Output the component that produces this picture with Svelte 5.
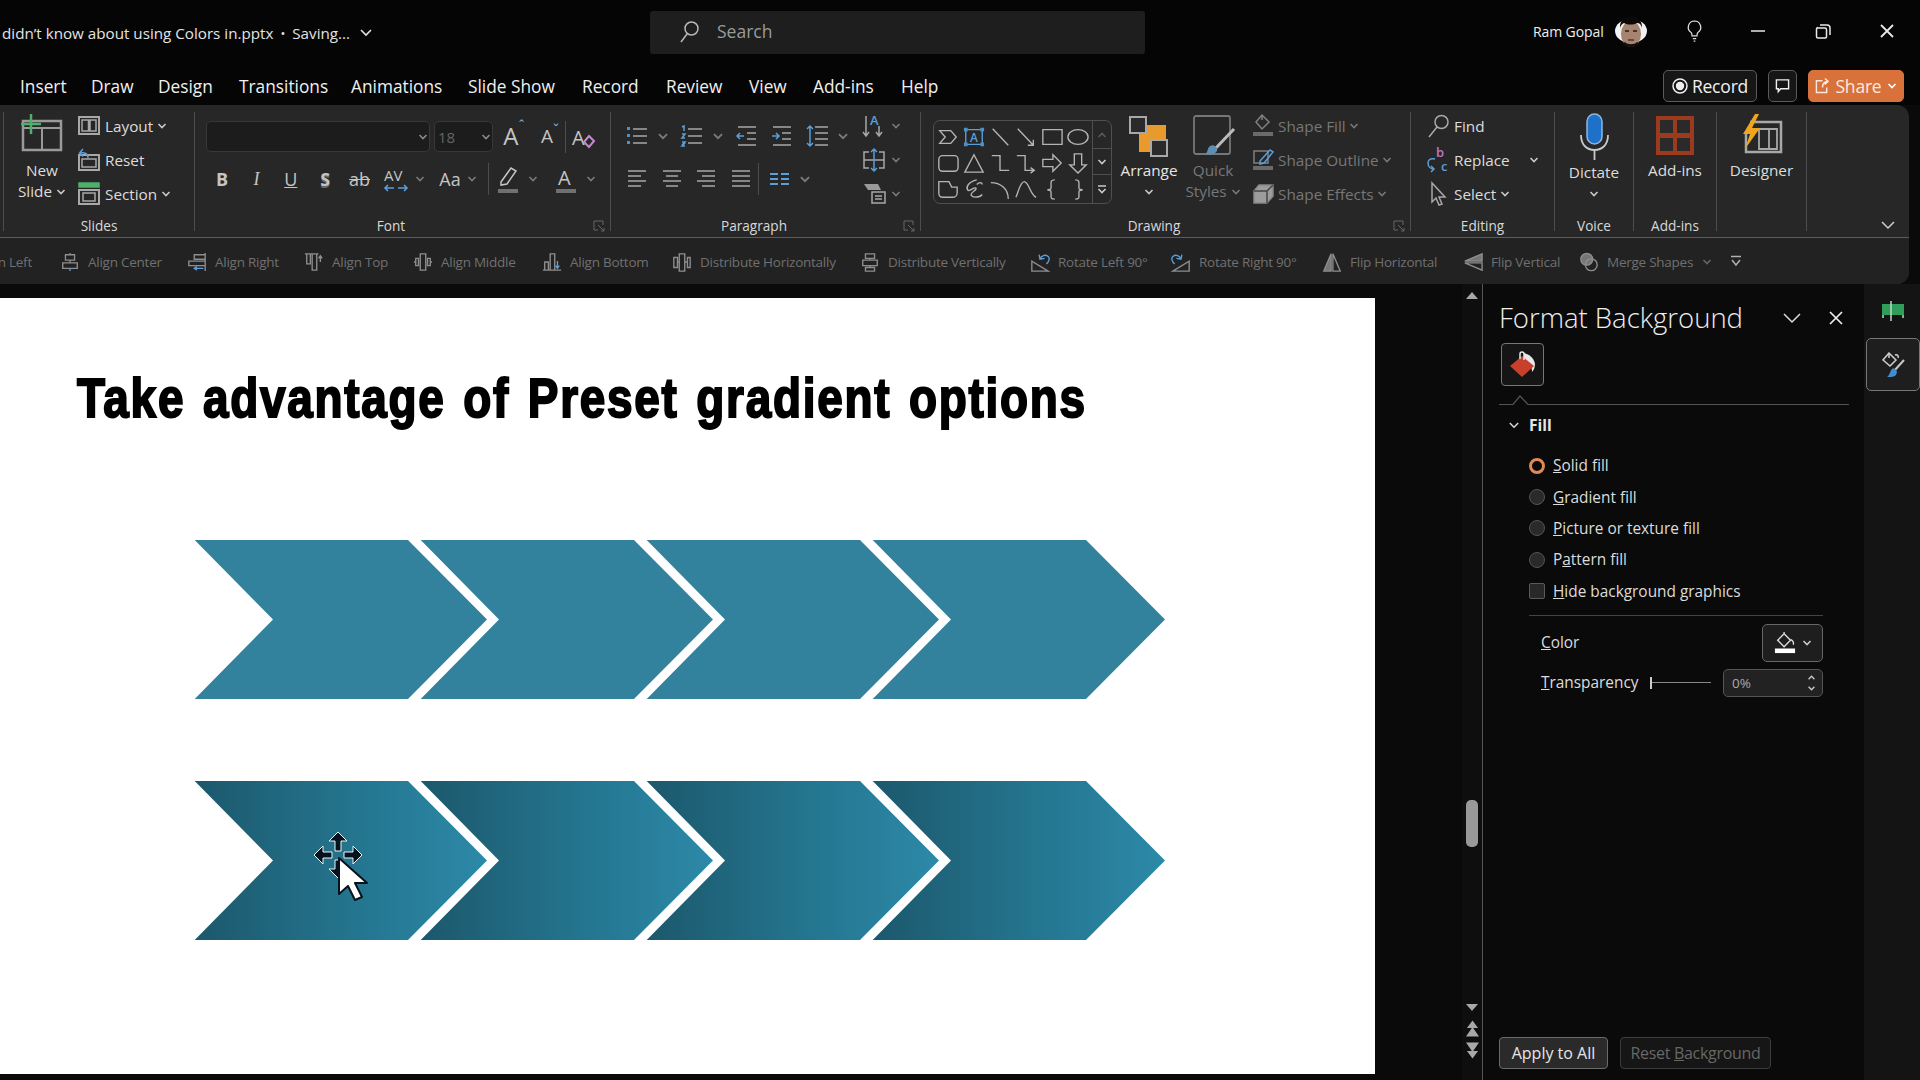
<script>
  const tabs = ["Insert", "Draw", "Design", "Transitions", "Animations", "Slide Show", "Record", "Review", "View", "Add-ins", "Help"];

  const qat = [
    { t: "Align Left", d: "M2 1v20M2 4h10v5H2zM2 12h16v5H2z" },
    { t: "Align Center", d: "M6 3h10v6H6zM3 12h16v6H3zM11 1v2M11 9v3", a: "M11 18v3" },
    { t: "Align Right", d: "M20 1v20M8 3h12v5H8zM2 10h18v5H2z", a: "M18 18H8m3-2-3 2 3 2" },
    { t: "Align Top", d: "M1 2h15M3 2v11h4V2M9 2v18h5V2M18 11V4m-2 3 2-3 2 3" },
    { t: "Align Middle", d: "M1 11h2M3 7h3v8H3zM8 2h6v18H8zM16 7h3v8h-3zM19 11h2" },
    { t: "Align Bottom", d: "M1 20h20M3 11h4v9H3zM9 2h5v18H9z", a: "M17 10v8m-2-3 2 3 2-3" },
    { t: "Distribute Horizontally", d: "M2 6h4v11H2zM8 2h6v19H8zM17 6h3v11h-3zM6 11h2M14 11h3" },
    { t: "Distribute Vertically", d: "M6 2h10v5H6zM3 9h16v6H3zM6 17h10v4H6zM11 7v2M11 15v2" },
    { t: "Rotate Left 90°", d: "M2 10v11h18z", a: "M11 8c1-4 6-6 9-3 2 2 1 6-2 8M10 3l1 5 5-1" },
    { t: "Rotate Right 90°", d: "M20 10v11H2z", a: "M11 8C10 4 5 2 2 5c-2 2-1 6 2 8M12 3l-1 5-5-1" },
    { t: "Flip Horizontal", d: "M2 21 10 2v19zM12 2l8 19h-8z", fill: "M2 21 10 2v19z" },
    { t: "Flip Vertical", d: "M21 2 2 10h19zM2 12l19 8v-8z", fill: "M21 2 2 10h19z" },
    { t: "Merge Shapes", d: "M15 8A6.500 6.500 0 1 1 2 8a6.500 6.500 0 0 1 13 0zM20 14a6.500 6.500 0 1 1-13 0 6.500 6.500 0 0 1 13 0z", fill: "M15 8A6.500 6.500 0 1 1 2 8a6.500 6.500 0 0 1 13 0z", cv: true }
  ];

  const gallery = [
    "M3 5h12l6 7-6 7H3l6-7z",
    "box",
    "M4 3l17 18",
    "M3 3l17 18m-6 0h6v-6",
    "M2 4h21v16H2z",
    "M23 12a11 8 0 1 1-22 0 11 8 0 0 1 22 0z",
    "M6 4h13a4 4 0 0 1 4 4v9a4 4 0 0 1-4 4H6a4 4 0 0 1-4-4V8a4 4 0 0 1 4-4z",
    "M12 3l10 19H2z",
    "M3 4h9v16h10",
    "M2 4h9v16h10m-4-3 4 3-4 3",
    "M2 8h11V3l9 9-9 9v-5H2z",
    "M8 2h8v12h5l-9 9-9-9h5z",
    "M2 4h11l3 6h6v6a5 5 0 0 1-5 5H6a4 4 0 0 1-4-4z",
    "M15 2C6 4 3 10 5 13c2 3 7-4 9-2s-7 5-5 8 10 2 12-1M15 7c3-3 6-2 6 0",
    "M2 5c10 0 19 6 19 18",
    "M1 21C4 14 6 4 10 4c5 0 7 15 13 17",
    "M15 2c-5 0-4 3-4 7s0 3-4 4c4 1 4 0 4 4s-1 6 4 6",
    "M9 2c5 0 4 3 4 7s0 3 4 4c-4 1-4 0-4 4s1 6-4 6"
  ];

  const options = [
    ["", "S", "olid fill", true],
    ["", "G", "radient fill", false],
    ["", "P", "icture or texture fill", false],
    ["P", "a", "ttern fill", false]
  ];

  const chevron = "M0 0H213.3L292.3 79.5 213.3 159H0L78.3 79.5Z";
  const steps = [0, 226, 452, 678];
</script>

{#snippet cv(cls = "")}
  <svg class="cv {cls}" viewBox="0 0 10 6"><path d="M1.500 1 5 4.500 8.500 1" /></svg>
{/snippet}

{#snippet launcher()}
  <svg class="launch" viewBox="0 0 12 12"><path d="M1 1h9v4M1 1v9h4M5 5l6 6M8 11h3V8" /></svg>
{/snippet}

<div class="app">
  <header class="titlebar">
    <div class="doc">
      <span>didn’t know about using Colors in.pptx</span>
      <span class="dot">•</span>
      <span>Saving...</span>
      <svg class="doc-cv" viewBox="0 0 12 8"><path d="M1 1l5 5 5-5" /></svg>
    </div>
    <div class="search">
      <svg viewBox="0 0 20 22"><path d="M19 7.500a6.500 6.500 0 1 1-13 0 6.500 6.500 0 0 1 13 0zM8 13l-6 8" /></svg>
      <span>Search</span>
    </div>
    <div class="win">
      <span class="user">Ram Gopal</span>
      <svg class="avatar" viewBox="0 0 36 36">
        <ellipse cx="18" cy="18" rx="16" ry="12" fill="#f2f2f2" stroke="none" />
        <ellipse cx="18" cy="21" rx="10" ry="13" fill="#a58470" stroke="none" />
        <path d="M7 15C6 -1 30 -1 29 15 28 11 26 10 24 10 20 12 15 12 11 10 9 11 8 12 7 15z" fill="#0a0808" stroke="none" />
        <path d="M9 31c3 4 15 4 18 0l-3-2c-2 3-10 3-12 0z" fill="#120d0c" stroke="none" />
        <path d="M12 18h4M20 18h4" stroke="#2a1a14" stroke-width="1.600" />
        <path d="M15 27h6" stroke="#5a2f28" stroke-width="1.500" />
      </svg>
      <svg class="bulb" viewBox="0 0 18 26"><path d="M9 1a7.500 7.500 0 0 0-4 13.800c1 1 1 3 1 4h6c0-1 0-3 1-4A7.500 7.500 0 0 0 9 1zM7 22h4M8 25h2" /></svg>
      <svg class="winbtn min" viewBox="0 0 14 14"><path d="M0 7h14" /></svg>
      <svg class="winbtn rest" viewBox="0 0 16 16"><path d="M2 5h8a1.500 1.500 0 0 1 1.500 1.500V14a1.500 1.500 0 0 1-1.500 1H3a1.500 1.500 0 0 1-1.500-1.500V6A1.500 1.500 0 0 1 3 4.500M5 2h7a3 3 0 0 1 3 3v7" /></svg>
      <svg class="winbtn cls" viewBox="0 0 14 14"><path d="M1 1l12 12M13 1 1 13" /></svg>
    </div>
  </header>

  <nav class="tabs">
    {#each tabs as tab}
      <span class="tab">{tab}</span>
    {/each}
    <div class="actions">
      <button class="rec">
        <svg viewBox="0 0 16 16"><circle cx="8" cy="8" r="7" /><circle cx="8" cy="8" r="4.200" fill="#eee" stroke="none" /></svg>
        Record
      </button>
      <button class="cmt">
        <svg viewBox="0 0 16 16"><path d="M1.500 2h13v9.500H6L3.500 14.500v-3h-2z" /></svg>
      </button>
      <button class="share">
        <svg viewBox="0 0 16 18"><path d="M8 4H1.500v12.500h11V11M8 11c0-4 2-6 6-6.500M10.500 1.500 14 4.500 10.500 8" /></svg>
        Share
        {@render cv()}
      </button>
    </div>
  </nav>

  <section class="ribwrap">
    <div class="ribbon">
      <div class="sep first"></div>

      <div class="group g-slides">
        <div class="body row">
          <div class="big newslide">
            <svg class="bi" viewBox="0 0 46 47">
              <path d="M4 7h38v29H4z" stroke="#9a9a9a" stroke-width="2.500" />
              <path d="M4 14h38M23 14v22" stroke="#9a9a9a" stroke-width="2" />
              <path d="M12 0v20M2 10h20" stroke="#4fb06a" stroke-width="2.500" />
            </svg>
            <span>New</span>
            <span class="cvline">Slide {@render cv()}</span>
          </div>
          <div class="list">
            <div class="li">
              <svg class="lic" viewBox="0 0 22 22"><path d="M1 2h20v17H1z" stroke-width="2" /><path d="M4 5h6.500v11H4zM12 5h6v11h-6z" /></svg>
              <span>Layout</span>{@render cv()}
            </div>
            <div class="li">
              <svg class="lic" viewBox="0 0 22 22"><path d="M1 6h20v15H1z" stroke-width="2" /><path d="M4 10h14v8H4z" /><path class="blue" d="M10 9C10 4 6 3 2 4M5 0 1.500 4 5 7.500" /></svg>
              <span>Reset</span>
            </div>
            <div class="li">
              <svg class="lic" viewBox="0 0 22 24"><path d="M1 1h20v4H1z" fill="#4fb06a" stroke="#4fb06a" /><path d="M1 8h20v14H1z" stroke-width="2" /><path d="M5 11h12v8H5z" /></svg>
              <span>Section</span>{@render cv()}
            </div>
          </div>
        </div>
        <div class="label"><span>Slides</span></div>
      </div>
      <div class="sep"></div>

      <div class="group g-font">
        <div class="body col">
          <div class="frow">
            <div class="field fontname">{@render cv()}</div>
            <div class="field fontsize"><span>18</span>{@render cv()}</div>
            <span class="t t36 gl big-a">A<sup class="up">ˆ</sup></span>
            <span class="t t34 gl mid-a">A<sup class="dn">ˇ</sup></span>
            <span class="vr"></span>
            <span class="t t36">
              <svg viewBox="0 0 26 26">
                <text x="1" y="21" class="svgt">A</text>
                <path d="M18 12l5 5-5 6-5-5z" stroke="#c48ad0" stroke-width="2" />
              </svg>
            </span>
          </div>
          <div class="frow r2">
            <span class="t t30 fmt b">B</span>
            <span class="t t30 fmt i">I</span>
            <span class="t t30 fmt u">U</span>
            <span class="t t30 fmt s">S</span>
            <span class="t t30 fmt st">ab</span>
            <span class="t pair av">
              <svg class="pic" viewBox="0 0 30 30">
                <text x="3" y="17" class="svgt sm">AV</text>
                <path class="blue" d="M4 24h9M7 21l-3 3 3 3M17 24h9M23 21l3 3-3 3" />
              </svg>
              {@render cv()}
            </span>
            <span class="t pair aa"><span class="fmt">Aa</span>{@render cv()}</span>
            <span class="vr"></span>
            <span class="t pair hl">
              <svg class="pic" viewBox="0 0 24 28">
                <path d="M5 17 15 3l5 3-9 13-6 1z" />
                <path d="M2 24h20v4H2z" fill="#707070" stroke="none" />
              </svg>
              {@render cv()}
            </span>
            <span class="t pair fc">
              <svg class="pic" viewBox="0 0 24 28">
                <text x="4" y="20" class="svgt">A</text>
                <path d="M2 24h20v4H2z" fill="#707070" stroke="none" />
              </svg>
              {@render cv()}
            </span>
          </div>
        </div>
        <div class="label launchable"><span>Font</span>{@render launcher()}</div>
      </div>
      <div class="sep"></div>

      <div class="group g-para">
        <div class="body row">
          <div class="col pcols">
            <div class="prow">
              <span class="pr">
                <svg viewBox="0 0 24 24"><path d="M8 5h14M8 12h14M8 19h14" /><path class="bluefill" d="M2 3h3v3H2zM2 10h3v3H2zM2 17h3v3H2z" /></svg>
                {@render cv()}
              </span>
              <span class="pr">
                <svg viewBox="0 0 24 24"><path d="M8 5h14M8 12h14M8 19h14" /><path class="blue" d="M2 3l2-1v5M2 10h3l-3 4h3M2 18h3l-2 2h1l-2 2h3" /></svg>
                {@render cv()}
              </span>
              <svg viewBox="0 0 24 24"><path d="M3 3h18M12 9h9M12 15h9M3 21h18" /><path class="blue" d="M9 12H2m3-3-3 3 3 3" /></svg>
              <svg viewBox="0 0 24 24"><path d="M3 3h18M12 9h9M12 15h9M3 21h18" /><path class="blue" d="M2 12h7M6 9l3 3-3 3" /></svg>
              <span class="pr">
                <svg viewBox="0 0 24 24"><path d="M10 3h13M10 9h13M10 15h13M10 21h13" /><path class="blue" d="M5 2v20M2 5l3-3 3 3M2 19l3 3 3-3" /></svg>
                {@render cv()}
              </span>
            </div>
            <div class="prow r2">
              <svg viewBox="0 0 24 24"><path d="M3 4h18M3 9h13M3 14h18M3 19h13" /></svg>
              <svg viewBox="0 0 24 24"><path d="M3 4h18M6 9h12M3 14h18M6 19h12" /></svg>
              <svg viewBox="0 0 24 24"><path d="M3 4h18M8 9h13M3 14h18M8 19h13" /></svg>
              <svg viewBox="0 0 24 24"><path d="M3 4h18M3 9h18M3 14h18M3 19h18" /></svg>
              <span class="vr"></span>
              <span class="pr">
                <svg viewBox="0 0 24 24"><path class="blue" d="M3 7h8M3 12h8M3 17h8M14 7h8M14 12h8M14 17h8" stroke-width="1.800" /></svg>
                {@render cv()}
              </span>
            </div>
          </div>
          <div class="list pside">
            <div class="li">
              <svg class="lic" viewBox="0 0 24 26"><path d="M4 3v20M1 19l3 4 3-4M17 13v10M14 19l3 4 3-4" /><text x="8" y="12" class="svgt xs blue-t">A</text></svg>
              {@render cv()}
            </div>
            <div class="li">
              <svg class="lic" viewBox="0 0 24 24"><path d="M7 4H2v16h5M17 4h5v16h-5M2 12h20" /><path class="blue" d="M12 1v22M9 4l3-3 3 3M9 20l3 3 3-3" /></svg>
              {@render cv()}
            </div>
            <div class="li">
              <svg class="lic" viewBox="0 0 24 24"><path d="M2 2h14l3 6H6z" fill="#9a9a9a" stroke="none" /><path d="M10 10h13v11H10zM13 14h7M13 17h7" /></svg>
              {@render cv()}
            </div>
          </div>
        </div>
        <div class="label launchable"><span>Paragraph</span>{@render launcher()}</div>
      </div>
      <div class="sep"></div>

      <div class="group g-draw">
        <div class="body row">
          <div class="gallery">
            <div class="cells">
              {#each gallery as d}
                <svg viewBox="0 0 24 24">
                  {#if d === "box"}
                    <path class="blue" d="M3 4h18v16H3z" stroke-width="1.500" />
                    <path class="bluefill" d="M1 2h4v4H1zM19 2h4v4h-4zM1 18h4v4H1zM19 18h4v4h-4z" />
                    <text x="7.500" y="17" class="svgt xs blue-t">A</text>
                  {:else}
                    <path {d} />
                  {/if}
                </svg>
              {/each}
            </div>
            <div class="gscroll">
              <span class="dim"><svg class="cv" viewBox="0 0 10 6"><path d="M1.500 5 5 1.500 8.500 5" /></svg></span>
              <span class="boxed">{@render cv()}</span>
              <span class="boxed more"><svg class="cv" viewBox="0 0 10 9"><path d="M1 1h8M1.500 4 5 7.500 8.500 4" /></svg></span>
            </div>
          </div>
          <div class="big arrange">
            <svg class="bi" viewBox="0 0 46 47">
              <path d="M13 11h27v27H13z" fill="#e99a2c" stroke="none" />
              <path d="M4 3h16v16H4zM25 26h16v16H25z" fill="#2a2a2a" stroke="#a8a8a8" stroke-width="2" />
            </svg>
            <span>Arrange</span>
            <span class="cvline">{@render cv()}</span>
          </div>
          <div class="big quick off">
            <svg class="bi" viewBox="0 0 46 47">
              <path d="M6 2h32a2 2 0 0 1 2 2v34a2 2 0 0 1-2 2H6a2 2 0 0 1-2-2V4a2 2 0 0 1 2-2z" stroke="#777" stroke-width="1.800" />
              <path d="M44 15 24 36" stroke="#bbb" stroke-width="3" />
              <path d="M25 32c3 2 3 5 0 7-3 2-7 2-10 1 3-1 2-6 5-8 2-1 3-1 5 0z" fill="#5d8fb5" stroke="none" />
            </svg>
            <span>Quick</span>
            <span class="cvline">Styles {@render cv()}</span>
          </div>
          <div class="list off shape">
            <div class="li">
              <svg class="lic" viewBox="0 0 22 24"><path d="M10 1 4 8l6 7 7-7zM10 1v5" /><path d="M1 18h20v4H1z" fill="#6a6a6a" stroke="none" /></svg>
              <span>Shape Fill</span>{@render cv()}
            </div>
            <div class="li">
              <svg class="lic" viewBox="0 0 22 24"><path d="M2 3h14v12H2z" /><path class="blue" d="M8 13 18 2l3 2-9 11-4 1z" /><path d="M1 18h20v4H1z" fill="#6a6a6a" stroke="none" /></svg>
              <span>Shape Outline</span>{@render cv()}
            </div>
            <div class="li">
              <svg class="lic" viewBox="0 0 22 24"><path d="M7 3h14v11l-6 7H2V9z" fill="#9c9c9c" stroke="#888" /><path d="M2 9h13v12M15 9l6-6" stroke="#444" /></svg>
              <span>Shape Effects</span>{@render cv()}
            </div>
          </div>
        </div>
        <div class="label launchable"><span>Drawing</span>{@render launcher()}</div>
      </div>
      <div class="sep"></div>

      <div class="group g-edit">
        <div class="body">
          <div class="list">
            <div class="li">
              <svg class="lic" viewBox="0 0 22 24"><path d="M21 8a6.500 6.500 0 1 1-13 0 6.500 6.500 0 0 1 13 0zM10 13l-8 10" /></svg>
              <span>Find</span>
            </div>
            <div class="li">
              <svg class="lic" viewBox="0 0 22 24">
                <text x="9" y="9" class="svgt xs purple-t">b</text>
                <text x="14" y="23" class="svgt xs blue-t">c</text>
                <path class="blue" d="M8 11C3 10 1 12 1 15c0 4 3 6 6 6M4 18l3 3-3 3" />
              </svg>
              <span>Replace</span><span class="gapcv">{@render cv()}</span>
            </div>
            <div class="li">
              <svg class="lic" viewBox="0 0 22 24"><path d="M5 1v19l4-4 3 7 3-1-3-7h6z" /></svg>
              <span>Select</span>{@render cv()}
            </div>
          </div>
        </div>
        <div class="label"><span>Editing</span></div>
      </div>
      <div class="sep"></div>

      <div class="group g-voice">
        <div class="body">
          <div class="big dictate">
            <svg class="bi" viewBox="0 0 46 47">
              <rect x="16" y="0" width="15" height="30" rx="7.500" fill="#1e71c9" stroke="#8fb7dc" />
              <path d="M10 21c0 10 6 15 13.500 15S37 31 37 21M23.500 36v10" stroke="#c8c8c8" stroke-width="1.800" />
            </svg>
            <span>Dictate</span>
            <span class="cvline">{@render cv()}</span>
          </div>
        </div>
        <div class="label"><span>Voice</span></div>
      </div>
      <div class="sep"></div>

      <div class="group g-addins">
        <div class="body">
          <div class="big">
            <svg class="bi" viewBox="0 0 46 47">
              <path d="M4 2h38v39H4z" fill="#9c3a1d" stroke="none" />
              <path d="M8 6h13v13H8zM25 6h13v13H25zM8 24h13v13H8zM25 24h13v13H25z" fill="#2a2a2a" stroke="none" />
            </svg>
            <span>Add-ins</span>
          </div>
        </div>
        <div class="label"><span>Add-ins</span></div>
      </div>
      <div class="sep"></div>

      <div class="group g-designer">
        <div class="body">
          <div class="big">
            <svg class="bi" viewBox="0 0 46 47">
              <path d="M11 8h31v30H7V20" stroke="#a8a8a8" stroke-width="2.500" />
              <path d="M20 15h18v20H20zM30 15v20" stroke="#a8a8a8" stroke-width="1.800" />
              <path d="M16 0 4 20h7L6 35l15-21h-8l7-14z" fill="#f0a51e" stroke="none" />
            </svg>
            <span>Designer</span>
          </div>
        </div>
      </div>
      <div class="sep"></div>

      <svg class="collapse" viewBox="0 0 14 8"><path d="M1 1l6 6 6-6" /></svg>
    </div>

    <div class="qat">
      {#each qat as q}
        <div class="qi">
          <svg class="qic" viewBox="0 0 22 22">
            {#if q.fill}<path d={q.fill} fill="#777" stroke="none" />{/if}
            <path d={q.d} />
            {#if q.a}<path class="blue" d={q.a} />{/if}
          </svg>
          <span>{q.t}</span>
          {#if q.cv}{@render cv()}{/if}
        </div>
      {/each}
      <svg class="qmore" viewBox="0 0 12 14"><path d="M1 1.500h10M2 5l4 5 4-5" /></svg>
    </div>
  </section>

  <main class="main">
    <div class="slide">
      <h1>Take advantage of Preset gradient options</h1>
      <svg class="art" viewBox="0 0 1375 430">
        <defs>
          <linearGradient id="dark" x1="0" x2="1" y1="0" y2="0">
            <stop offset="0" stop-color="#1c586c" />
            <stop offset="0.55" stop-color="#24758f" />
            <stop offset="1" stop-color="#2c89a8" />
          </linearGradient>
        </defs>
        {#each steps as dx}
          <path d={chevron} transform="translate({194.700 + dx} 0)" fill="#32829e" />
        {/each}
        {#each steps as dx}
          <path d={chevron} transform="translate({194.700 + dx} 241)" fill="url(#dark)" />
        {/each}
        <g stroke="#eaf6fa" stroke-width="1" stroke-linejoin="round">
          <path d="M338 292l9 9h-6v10h-6v-10h-6zM338 338l-9-9h6v-9h6v9h6zM314 315l9-9v6h9v6h-9v6zM362 315l-9 9v-6h-9v-6h9v-6z" fill="#06121c" />
        </g>
        <path d="M339 318v36l9-8 7 14 7-3-7-14h12z" fill="#fff" stroke="#06121c" stroke-width="2" stroke-linejoin="round" />
      </svg>
    </div>

    <div class="gutter">
      <div class="sbar">
        <span class="tri up"></span>
        <span class="thumb"></span>
        <span class="tri down"></span>
        <svg class="dbl" viewBox="0 0 14 17"><path d="M7 0l6 8H1zM7 7l7 10H0z" /></svg>
        <svg class="dbl" viewBox="0 0 14 17"><path d="M7 17 1 9h12zM7 10 0 0h14z" /></svg>
      </div>
    </div>

    <aside class="pane">
      <div class="phead">
        <h2>Format Background</h2>
        <svg class="pcv" viewBox="0 0 18 10"><path d="M1 1l8 8 8-8" /></svg>
        <svg class="px" viewBox="0 0 14 14"><path d="M1 1l12 12M13 1 1 13" /></svg>
      </div>
      <div class="ptab">
        <svg viewBox="0 0 32 32">
          <path d="M17 4c4 1 10 4 11 11 0 3-1 6-3 8 0-4-1-9-8-12z" fill="#e8e8e8" stroke="none" />
          <path d="M15 7 27 17 15 28 3 17z" fill="#c8402c" stroke="none" />
          <path d="M13 10V5a2 2 0 0 1 4 0v6" stroke="#e8e8e8" stroke-width="1.500" />
        </svg>
      </div>
      <svg class="prule" viewBox="0 0 350 12"><path d="M0 11.500h14L21 3l8 8.500h321" /></svg>

      <div class="fillhead">
        <svg viewBox="0 0 12 8"><path d="M1 1l5 5 5-5" /></svg>
        <strong>Fill</strong>
      </div>

      <div class="opts">
        {#each options as [pre, key, rest, on]}
          <div class="opt">
            <span class="radio" class:on></span>
            <span>{pre}<u>{key}</u>{rest}</span>
          </div>
        {/each}
        <div class="opt">
          <span class="check"></span>
          <span><u>H</u>ide background graphics</span>
        </div>
      </div>

      <div class="settings">
        <div class="setrow color">
          <span><u>C</u>olor</span>
          <div class="colorbtn">
            <svg class="cic" viewBox="0 0 24 24">
              <path d="M11 2 4 9l7 7 7-7zM11 2V0" />
              <path d="M18 8c2 1 4 3 3 6" />
              <path d="M1 18h22v5H1z" fill="#fff" stroke="none" />
            </svg>
            {@render cv()}
          </div>
        </div>
        <div class="setrow transp">
          <span><u>T</u>ransparency</span>
          <div class="slider"><i></i></div>
          <div class="spin">
            <span>0%</span>
            <div class="arrows">
              <svg class="cv" viewBox="0 0 10 6"><path d="M1.500 5 5 1.500 8.500 5" /></svg>
              {@render cv()}
            </div>
          </div>
        </div>
      </div>

      <div class="pfoot">
        <button class="apply">Apply to All</button>
        <button class="reset">Reset <u>B</u>ackground</button>
      </div>
    </aside>

    <aside class="rail">
      <svg class="railtop" viewBox="0 0 26 20">
        <path d="M2 3h22v11H2z" fill="#2f9e5a" stroke="none" />
        <path d="M11 0v20M3 14v3M23 14v3" stroke="#bcd8c6" stroke-width="1.500" />
      </svg>
      <div class="railbtn">
        <svg viewBox="0 0 28 28">
          <path d="M10 2 4 9l7 6 6-6z" stroke="#d0d0d0" stroke-width="1.500" />
          <path d="M10 2v5M16 4c2-1 4 1 3 3" stroke="#d0d0d0" stroke-width="1.500" />
          <path d="M25 9 15 20" stroke="#c8c8c8" stroke-width="2" />
          <path d="M16 18c3 2 2 5 0 7-2 1-5 1-8 1 3-2 3-6 5-8 1-1 2-1 3 0z" fill="#3f8fd0" stroke="none" />
        </svg>
      </div>
    </aside>
  </main>
</div>

<style>
  :global(body) {
    margin: 0;
    background: #0a0a0a;
  }

  .app {
    width: 1920px;
    height: 1080px;
    overflow: hidden;
    display: flex;
    flex-direction: column;
    background: #0a0a0a;
    color: #e6e6e6;
    font-family: "Open Sans", "Noto Sans", "Liberation Sans", sans-serif;
    font-size: 14.5px;
  }

  svg {
    display: block;
    fill: none;
    stroke: currentColor;
    stroke-width: 1.5;
    flex: none;
    overflow: visible;
  }

  button {
    font: inherit;
    color: inherit;
    background: none;
    padding: 0;
  }

  .blue { stroke: #5a9fd8; }
  .bluefill { fill: #4c90c8; stroke: none; }
  .svgt { font: 400 20px "Open Sans", sans-serif; fill: #c4c4c4; stroke: none; }
  .svgt.sm { font-size: 15px; }
  .svgt.xs { font-size: 13px; font-weight: 600; }
  .blue-t { fill: #5a9fd8; }
  .svgt.purple-t { fill: #b678c9; }

  .cv {
    width: 10px;
    height: 6px;
    color: #c9c9c9;
    stroke-width: 1.6;
  }

  /* title bar */
  .titlebar {
    height: 70px;
    background: #050505;
    display: grid;
    grid-template-columns: 650px 495px 1fr;
    align-items: start;
    padding-top: 11px;
    box-sizing: border-box;
  }

  .doc {
    display: flex;
    align-items: center;
    gap: 7px;
    height: 43px;
    padding-left: 2px;
    font-size: 15.200px;
    color: #e3e3e3;
  }
  .doc .dot { font-size: 13px; }
  .doc-cv { width: 12px; height: 8px; margin-left: 3px; stroke-width: 1.6; }

  .search {
    height: 43px;
    background: #1e1e1e;
    border-radius: 3px;
    display: flex;
    align-items: center;
    padding: 0 0 4px 29px;
    box-sizing: border-box;
    gap: 18px;
    color: #9a9a9a;
    font-size: 17.500px;
  }
  .search svg { width: 20px; height: 22px; color: #b8b8b8; margin-top: 3px; }

  .win {
    display: flex;
    align-items: center;
    height: 40px;
    padding-left: 388px;
    box-sizing: border-box;
  }
  .user { font-size: 14px; width: 80px; white-space: nowrap; letter-spacing: -0.1px; color: #eee; }
  .avatar { width: 36px; height: 36px; }
  .bulb { width: 15px; height: 22px; margin-left: 38px; color: #dedede; }
  .winbtn { color: #e8e8e8; }
  .min { width: 14px; height: 14px; margin-left: 49px; }
  .rest { width: 16px; height: 16px; margin-left: 50px; }
  .cls { width: 14px; height: 14px; margin-left: 49px; stroke-width: 1.8; }

  /* tabs */
  .tabs {
    height: 35px;
    background: #050505;
    display: grid;
    grid-template-columns: 71px 67px 81px 112px 117px 114px 84px 83px 64px 88px 60px 1fr;
    align-items: center;
    padding: 0 0 3px 20px;
    box-sizing: border-box;
    font-size: 17.300px;
    color: #f0f0f0;
  }

  .actions {
    justify-self: end;
    display: flex;
    gap: 11px;
    padding-right: 16px;
    margin-top: -1px;
  }
  .actions button {
    height: 32px;
    border: 1px solid #5a5a5a;
    border-radius: 5px;
    display: flex;
    align-items: center;
    justify-content: center;
    box-sizing: border-box;
    font-size: 17.500px;
    letter-spacing: -0.2px;
  }
  .rec { width: 94px; gap: 4px; background: #161616; }
  .rec svg { width: 16px; height: 16px; }
  .cmt { width: 29px; background: #161616; }
  .cmt svg { width: 15px; height: 15px; }
  .actions .share {
    width: 96px;
    gap: 5px;
    background: #d8713a;
    border-color: #d8713a;
    color: #fbe9df;
  }
  .share svg:first-child { width: 15px; height: 17px; }
  .share .cv { color: #fff; }

  /* ribbon */
  .ribwrap {
    width: 1909px;
    height: 179px;
    border-radius: 0 12px 12px 0;
    overflow: hidden;
    background: #272727;
    flex: none;
  }

  .ribbon {
    height: 133px;
    display: flex;
    align-items: flex-start;
    padding-top: 5px;
    box-sizing: border-box;
    border-bottom: 1.500px solid #5c5c5c;
    color: #dcdcdc;
    font-size: 15.300px;
  }

  .sep {
    width: 1px;
    height: 119px;
    margin-top: 2px;
    background: #4d4d4d;
    flex: none;
  }
  .sep.first { margin-left: 3px; }

  .group {
    height: 125px;
    display: grid;
    grid-template-rows: 102px 18px;
    row-gap: 5px;
    flex: none;
  }
  .g-slides { width: 190px; }
  .g-font { width: 415px; }
  .g-para { width: 309px; }
  .g-draw { width: 489px; }
  .g-edit { width: 143px; }
  .g-voice { width: 78px; }
  .g-addins { width: 82px; }
  .g-designer { width: 89px; }

  .body { min-width: 0; }
  .row { display: flex; align-items: flex-start; }
  .col { display: flex; flex-direction: column; }

  .label {
    display: flex;
    justify-content: center;
    align-items: center;
    font-size: 13.600px;
    line-height: 18px;
    color: #d8d8d8;
  }
  .label.launchable span { flex: 1; text-align: center; }
  .launch { width: 12px; height: 12px; color: #666; stroke-width: 1; margin: 0 5px 0 6px; }

  .big {
    display: flex;
    flex-direction: column;
    align-items: center;
    line-height: 21px;
    padding-top: 4px;
  }
  .big .bi { width: 46px; height: 47px; margin-bottom: -1px; }
  .cvline { display: flex; align-items: center; gap: 4px; min-height: 21px; }
  .off { color: #777; }
  .off .cv { color: #777; }

  .list { display: flex; flex-direction: column; margin-top: -1px; }
  .li {
    height: 34px;
    display: flex;
    align-items: center;
    gap: 5px;
    white-space: nowrap;
  }
  .lic { width: 22px; height: 24px; color: #a8a8a8; }
  .li .cv { margin-left: -1px; }

  .newslide { width: 76px; }
  .g-slides .list { margin-left: -2px; }

  /* font group */
  .g-font .body { padding: 11px 0 0 11px; gap: 11px; }
  .frow { display: flex; align-items: center; height: 31px; }
  .frow.r2 { height: 32px; gap: 4.400px; }

  .field {
    height: 31px;
    box-sizing: border-box;
    background: #1c1c1c;
    border: 1px solid #383838;
    border-radius: 5px;
    display: flex;
    align-items: center;
    justify-content: flex-end;
    padding-right: 1px;
  }
  .field .cv { color: #8a8a8a; }
  .fontname { width: 224px; margin-right: 4px; }
  .fontsize { width: 59px; justify-content: space-between; padding-left: 3px; color: #666; font-size: 15px; }

  .t { display: flex; align-items: center; justify-content: center; flex: none; color: #c4c4c4; }
  .t30 { width: 30px; }
  .t34 { width: 34px; }
  .t36 { width: 36px; }
  .t36 svg { width: 26px; height: 26px; }
  .gl { font-size: 24px; letter-spacing: 0; align-items: flex-start; margin-top: -2px; padding-left: 6px; box-sizing: border-box; }
  .big-a sup, .mid-a sup { font-size: 15px; line-height: 1; margin-top: -1px; color: #6fb1de; }
  .mid-a { font-size: 19px; padding-left: 8px; }

  .vr { width: 1px; height: 32px; background: #4d4d4d; flex: none; }
  .frow .vr { margin-left: 2px; }

  .fmt { font-size: 18px; letter-spacing: 0; color: #c4c4c4; }
  .b { font-weight: 700; margin-left: 1px; }
  .i { font-style: italic; font-family: "Liberation Serif", serif; }
  .u { text-decoration: underline; }
  .s { font-weight: 700; text-shadow: 0 2px 0 #666; }
  .st { text-decoration: line-through; }
  .pair { gap: 4px; justify-content: flex-start; }
  .av { width: 48px; padding-left: 2px; box-sizing: border-box; }
  .pic { width: 24px; height: 28px; }
  .av .pic { width: 30px; height: 30px; }
  .aa { width: 50px; padding-left: 8px; box-sizing: border-box; gap: 6px; }
  .hl { width: 50px; padding-left: 3px; box-sizing: border-box; gap: 8px; }
  .fc { width: 50px; padding-left: 6px; box-sizing: border-box; gap: 8px; }
  .pair .cv { color: #7a7a7a; }

  /* paragraph */
  .pcols { padding: 14px 0 0 14px; gap: 19px; width: 235px; flex: none; }
  .prow { display: flex; align-items: center; gap: 11px; height: 24px; }
  .prow svg:not(.cv) { width: 24px; height: 24px; color: #a8a8a8; }
  .pr { display: flex; align-items: center; gap: 8px; }
  .pr .cv { width: 12px; height: 7px; color: #7a7a7a; }
  .prow.r2 { gap: 10.500px; }
  .prow .vr { margin: 0 -3px 0 -5px; height: 32px; }
  .pside { margin-left: 2px; }
  .pside .li { gap: 5px; }
  .pside .cv { color: #7a7a7a; margin-left: 0; }
  .pside .lic { width: 24px; height: 26px; }

  /* drawing */
  .g-draw .body { padding: 10px 0 0 12px; }
  .gallery {
    width: 179px;
    height: 84px;
    box-sizing: border-box;
    border: 1.500px solid #4f4f4f;
    border-radius: 7px;
    display: flex;
    flex: none;
    overflow: hidden;
  }
  .cells {
    width: 158px;
    display: grid;
    grid-template-columns: repeat(6, 26px);
    grid-template-rows: 27px 26px 26px;
    padding: 2px 0 0 1px;
    box-sizing: border-box;
    flex: none;
    place-items: center;
    color: #b4b4b4;
  }
  .cells svg { width: 22px; height: 22px; }
  .gscroll { flex: 1; display: grid; grid-template-rows: 27px 26px 1fr; border-left: 1.500px solid #4f4f4f; }
  .gscroll span { display: flex; align-items: center; justify-content: center; }
  .gscroll .dim .cv { color: #5a5a5a; }
  .gscroll .boxed { border-top: 1.500px solid #4f4f4f; }
  .gscroll .more .cv { height: 9px; }

  .arrange { width: 74px; color: #e6e6e6; flex: none; margin-top: -10px; }
  .quick { width: 54px; flex: none; margin-top: -10px; }
  .shape { margin: -11px 0 0 12px; }
  .shape .li { gap: 4px; }
  .shape .lic { color: #808080; }

  /* editing */
  .g-edit .body { padding-left: 16px; }
  .gapcv { margin-left: 15px; display: flex; }

  .dictate .bi { margin-bottom: 1px; }

  .collapse { width: 14px; height: 8px; margin: 111px 14px 0 auto; color: #cfcfcf; }

  /* quick access row */
  .qat {
    height: 46px;
    background: #222;
    margin-left: -52px;
    padding-top: 1px;
    box-sizing: border-box;
    display: grid;
    grid-template-columns: 112px 127px 117px 109px 129px 130px 188px 170px 141px 151px 141px 116px 151px 20px;
    align-items: center;
    color: #707070;
    font-size: 13.500px;
    letter-spacing: -0.25px;
  }
  .qi { display: flex; align-items: center; gap: 8px; white-space: nowrap; }
  .qic { width: 20px; height: 22px; color: #8e8e8e; }
  .qi .cv { margin-left: 1px; color: #666; }
  .qmore { width: 12px; height: 14px; color: #b0b0b0; }

  /* body */
  .main {
    flex: 1;
    min-height: 0;
    display: flex;
    background: #0a0a0a;
  }

  .slide {
    width: 1375px;
    height: 776px;
    margin-top: 14px;
    background: #fff;
    flex: none;
    overflow: hidden;
  }

  h1 {
    margin: 0;
    padding: 70px 0 0 77px;
    height: 62px;
    font: 700 56px/60px "Liberation Sans", sans-serif;
    color: #000;
    letter-spacing: 2.100px;
    word-spacing: 4px;
    -webkit-text-stroke: 2px #000;
    white-space: nowrap;
    transform: scaleX(0.82);
    transform-origin: 77px 0;
  }

  .art {
    display: block;
    width: 1375px;
    height: 430px;
    margin-top: 110px;
    stroke: none;
  }

  .gutter {
    width: 108px;
    display: flex;
    justify-content: flex-end;
    flex: none;
  }
  .sbar {
    width: 21px;
    background: #0e0e0e;
    display: flex;
    flex-direction: column;
    align-items: center;
    padding-top: 8px;
    box-sizing: border-box;
    color: #a8a8a8;
    border-right: 1px solid #555;
  }
  .tri {
    width: 0;
    height: 0;
    border-left: 6px solid transparent;
    border-right: 6px solid transparent;
  }
  .tri.up { border-bottom: 7px solid #a8a8a8; }
  .tri.down { border-top: 7px solid #a8a8a8; margin-top: 157px; }
  .thumb {
    width: 12px;
    height: 47px;
    background: #999;
    border-radius: 5px;
    margin-top: 501px;
  }
  .dbl { width: 13px; height: 17px; fill: #a8a8a8; stroke: none; }
  .dbl:nth-of-type(1) { margin-top: 9px; }
  .dbl:nth-of-type(2) { margin-top: 5px; }

  .pane {
    width: 381px;
    box-sizing: border-box;
    padding: 15px 15px 11px 16px;
    display: flex;
    flex-direction: column;
    flex: none;
  }

  .phead { display: flex; align-items: center; height: 36px; }
  h2 {
    margin: 0;
    font-size: 27.500px;
    font-weight: 300;
    color: #eee;
    white-space: nowrap;
    width: 284px;
  }
  .pcv { width: 18px; height: 10px; margin-top: 2px; color: #ddd; }
  .px { width: 14px; height: 14px; margin: 2px 0 0 28px; color: #eee; stroke-width: 1.700; }

  .ptab {
    width: 43px;
    height: 43px;
    margin: 8px 0 0 2px;
    box-sizing: border-box;
    border: 1px solid #777;
    border-radius: 4px;
    background: #151515;
    display: flex;
    align-items: center;
    justify-content: center;
  }
  .ptab svg { width: 32px; height: 32px; }

  .prule { width: 350px; height: 12px; margin-top: 7px; color: #555; stroke-width: 1.200; }

  .fillhead { display: flex; align-items: center; gap: 10px; height: 20px; margin: 10px 0 0 10px; }
  .fillhead svg { width: 10px; height: 7px; color: #ddd; stroke-width: 1.700; }
  .fillhead strong { font-size: 15.500px; font-weight: 700; }

  .opts { margin: 15px 0 0 30px; color: #dcdcdc; font-size: 15.400px; }
  .opt { height: 31.400px; display: flex; align-items: center; gap: 8px; }
  .radio {
    width: 16px;
    height: 16px;
    box-sizing: border-box;
    border: 1px solid #555;
    border-radius: 50%;
    background: #2a2a2a;
  }
  .radio.on { border: 3.500px solid #dd8a55; background: #0a0a0a; }
  .check {
    width: 16px;
    height: 16px;
    box-sizing: border-box;
    border: 1px solid #5a5a5a;
    border-radius: 2px;
    background: #282828;
  }

  .settings {
    width: 294px;
    margin: 8px 0 0 30px;
    border-top: 1px solid #444;
    padding-top: 8px;
    font-size: 15.400px;
    color: #dcdcdc;
  }
  .setrow { display: flex; align-items: center; padding-left: 12px; }
  .setrow.color { height: 38px; justify-content: space-between; }
  .colorbtn {
    width: 61px;
    height: 38px;
    box-sizing: border-box;
    border: 1px solid #666;
    border-radius: 5px;
    background: #1e1e1e;
    display: flex;
    align-items: center;
    justify-content: center;
    gap: 6px;
  }
  .cic { width: 22px; height: 22px; color: #ddd; }
  .setrow.transp { height: 28px; margin-top: 7px; }
  .transp > span { width: 109px; white-space: nowrap; }
  .slider { width: 61px; height: 1px; background: #888; display: flex; align-items: center; }
  .slider i { width: 2px; height: 12px; background: #ccc; display: block; flex: none; }
  .spin {
    width: 100px;
    height: 28px;
    margin-left: 12px;
    box-sizing: border-box;
    border: 1px solid #555;
    border-radius: 5px;
    background: #222;
    display: flex;
    align-items: center;
    justify-content: space-between;
    padding: 0 6px 0 8px;
    color: #aaa;
    font-size: 13.500px;
  }
  .arrows { display: flex; flex-direction: column; gap: 6px; }
  .arrows .cv { width: 9px; height: 5px; }

  .pfoot { margin-top: auto; display: flex; gap: 12px; }
  .pfoot button {
    height: 32px;
    box-sizing: border-box;
    border-radius: 4px;
    font-size: 16px;
    white-space: nowrap;
  }
  .apply { width: 109px; border: 1px solid #6a6a6a; background: #2a2a2a; color: #e6e6e6; }
  .reset { width: 151px; border: 1px solid #3c3c3c; background: #161616; color: #676767; letter-spacing: -0.3px; }

  .rail {
    flex: 1;
    background: #141414;
    padding: 17px 0 0 2px;
    display: flex;
    flex-direction: column;
  }
  .railtop { width: 26px; height: 20px; margin-left: 14px; }
  .railbtn {
    height: 53px;
    margin-top: 17px;
    box-sizing: border-box;
    border: 1px solid #777;
    border-radius: 5px;
    background: #1e1e1e;
    display: flex;
    align-items: center;
    justify-content: center;
  }
  .railbtn svg { width: 28px; height: 28px; }
</style>
